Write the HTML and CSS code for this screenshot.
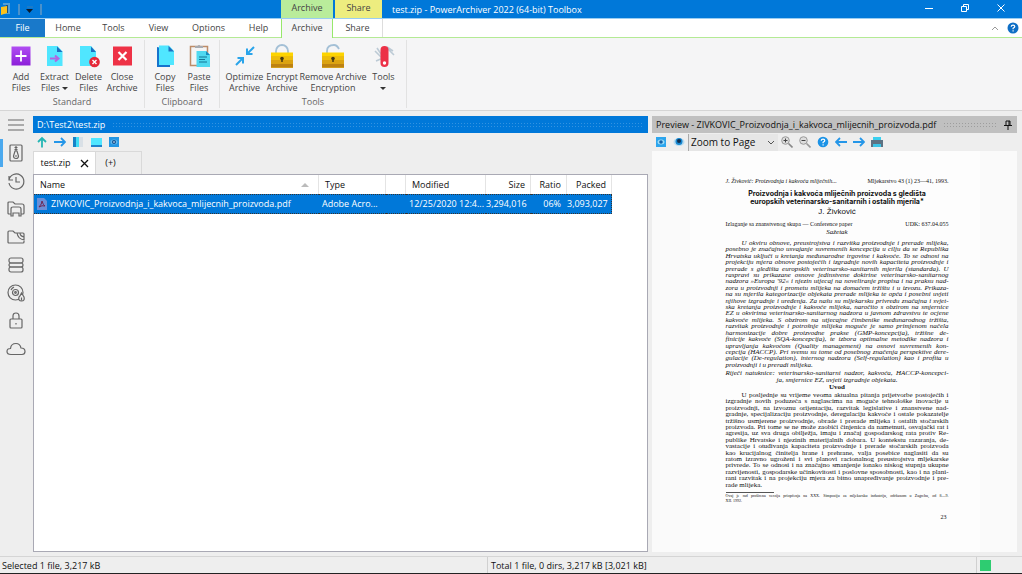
FILE: index.html
```html
<!DOCTYPE html>
<html lang="en">
<head>
<meta charset="utf-8">
<title>test.zip - PowerArchiver 2022 (64-bit) Toolbox</title>
<link rel="stylesheet" href="styles.css">
</head>
<body>
<div class="app">
  <header class="titlebar">
    <div class="quick">
      <svg width="12" height="14" viewBox="0 0 12 14"><path d="M3 2h6v9H4" fill="none" stroke="#4f9fd8" stroke-width="2"/><path d="M6 3h2v8H6z" fill="#28506e"/><path d="M1 5l6-1v7l-6 2z" fill="#fcc21b"/></svg>
      <i class="quick-sep"></i>
      <svg width="8" height="7" viewBox="0 0 8 7"><path d="M1 1h6" stroke="#3a7cb4"/><path d="M0 3h7L3.500 7z" fill="#0a1a2c"/></svg>
      <i class="quick-sep"></i>
    </div>
    <div class="context context-archive">Archive</div>
    <div class="context context-share">Share</div>
    <h1 class="title">test.zip - PowerArchiver 2022 (64-bit) Toolbox</h1>
    <div class="window-buttons">
      <button aria-label="Minimize"><svg width="10" height="10" viewBox="0 0 10 10"><path d="M1 5.500h8" stroke="#fff"/></svg></button>
      <button aria-label="Restore"><svg width="10" height="10" viewBox="0 0 10 10"><path d="M1.500 3.500h5v5h-5zM3.500 3V1.500h5v5H7" fill="none" stroke="#fff"/></svg></button>
      <button aria-label="Close"><svg width="10" height="10" viewBox="0 0 10 10"><path d="M1.500 1.500l7 7M8.500 1.500l-7 7" stroke="#fff"/></svg></button>
    </div>
  </header>

  <nav class="menu">
    <button class="menu-tab file">File</button>
    <button class="menu-tab wide">Home</button>
    <button class="menu-tab">Tools</button>
    <button class="menu-tab">View</button>
    <button class="menu-tab options">Options</button>
    <button class="menu-tab help">Help</button>
    <button class="menu-tab archive">Archive</button>
    <button class="menu-tab share">Share</button>
    <span class="spacer"></span>
    <button class="plain" aria-label="Collapse ribbon"><svg width="8" height="6" viewBox="0 0 8 6"><path d="M1 5l3-3 3 3" fill="none" stroke="#999"/></svg></button>
    <button class="plain" aria-label="Help"><svg width="12" height="12" viewBox="0 0 12 12"><circle cx="6" cy="6" r="5.500" fill="#0f6fc6"/><path d="M4.200 4.700Q4.300 3.200 6 3.200T7.800 4.600Q7.800 5.500 6.100 6.300V7.200M6.100 8.200v1.200" fill="none" stroke="#fff" stroke-width="1.200"/></svg></button>
  </nav>

  <div class="ribbon">
    <section class="group">
      <div class="tools">
        <button class="tool w32"><svg width="22" height="24" viewBox="0 0 22 24"><defs><linearGradient id="pu" x2="0" y2="1"><stop stop-color="#b04df2"/><stop offset="1" stop-color="#8c1fd9"/></linearGradient></defs><path d="M1.500 2.500h19v19h-19z" fill="url(#pu)"/><path d="M11 6.500v11M5.500 12h11" stroke="#fff" stroke-width="1.800"/></svg><span>Add<br>Files</span></button>
        <button class="tool w35"><svg width="22" height="24" viewBox="0 0 22 24"><path d="M3 2h10.500l5 5.500V22H3z" fill="#50e6ff"/><path d="M13 2.500l5.500 5.500H13z" fill="#1d6fc0"/><path d="M6 14.500h7M11 11.500l3.500 3-3.500 3" fill="none" stroke="#b165e0" stroke-width="2"/></svg><span>Extract<br>Files <b class="caret"></b></span></button>
        <button class="tool w33"><svg width="22" height="24" viewBox="0 0 22 24"><path d="M2 2h11l5 5.500V22H2z" fill="#50e6ff"/><path d="M13 2.500l5 5.500h-5z" fill="#1d6fc0"/><circle cx="16.500" cy="18" r="5.300" fill="#e62838"/><path d="M14.500 16l4 4M18.500 16l-4 4" stroke="#fff" stroke-width="1.400"/></svg><span>Delete<br>Files</span></button>
        <button class="tool w34"><svg width="22" height="24" viewBox="0 0 22 24"><path d="M2 2.500h19v19H2z" fill="#ee3246"/><path d="M7.500 8l8 8M15.500 8l-8 8" stroke="#fff" stroke-width="2.200"/></svg><span>Close<br>Archive</span></button>
      </div>
      <h2>Standard</h2>
    </section>
    <section class="group clipboard">
      <div class="tools">
        <button class="tool w34"><svg width="22" height="24" viewBox="0 0 22 24"><path d="M3 3v20h13V6z" fill="#1673cc"/><path d="M5 1.500h10l5 5.500v14H5z" fill="#50e6ff"/><path d="M14.500 2l5.500 5.500h-5.500z" fill="#1d6fc0"/></svg><span>Copy<br>Files</span></button>
        <button class="tool w34"><svg width="22" height="24" viewBox="0 0 22 24"><path d="M2.500 2.500h17v19h-17z" fill="#f4f4f4" stroke="#bd8c68" stroke-width="1.500"/><path d="M7 4V2h2.500Q11 0 12.500 2H15v2z" fill="#a8abb0"/><path d="M8.500 7H18l4 4v12H8.500z" fill="#50d9f0"/><path d="M18 7l4 4h-4z" fill="#168dc0"/><path d="M11 13h8M11 15.500h6M11 18h8" stroke="#157796"/></svg><span>Paste<br>Files</span></button>
      </div>
      <h2>Clipboard</h2>
    </section>
    <section class="group">
      <div class="tools">
        <button class="tool w39"><svg width="22" height="24" viewBox="0 0 22 24"><g fill="none" stroke="#2aa4ea" stroke-width="2"><path d="M20 3l-6.500 6.500M13 4.500V10h5.500"/><path d="M2 21l6.500-6.500M3.500 14H9v5.500"/></g></svg><span>Optimize<br>Archive</span></button>
        <button class="tool w36"><svg width="22" height="24" viewBox="0 0 22 24"><path d="M5 10V7a6 6 0 0 1 12 0v3" fill="none" stroke="#a4c0d6" stroke-width="1.800"/><path d="M0 8.500h22v15H0z" fill="#fdd400"/><path d="M0 12h22v11.500H0z" fill="#edbd0b"/><path d="M0 16h22v7.500H0z" fill="#dba312"/><path d="M0 20h22v3.500H0z" fill="#bd8212"/><path d="M11 14v4" stroke="#443913" stroke-width="1.500"/><circle cx="11" cy="14.500" r="1.800" fill="#443913"/></svg><span>Encrypt<br>Archive</span></button>
        <button class="tool w66"><svg width="22" height="24" viewBox="0 0 22 24"><path d="M5 9V7q0-6 7-6 3 0 5 4" fill="none" stroke="#a4c0d6" stroke-width="1.800"/><path d="M0 8.500h22v15H0z" fill="#fdd400"/><path d="M0 12h22v11.500H0z" fill="#edbd0b"/><path d="M0 16h22v7.500H0z" fill="#dba312"/><path d="M0 20h22v3.500H0z" fill="#bd8212"/><path d="M11 14v4" stroke="#443913" stroke-width="1.500"/><circle cx="11" cy="14.500" r="1.800" fill="#443913"/></svg><span>Remove Archive<br>Encryption</span></button>
        <button class="tool w35"><svg width="22" height="24" viewBox="0 0 22 24"><path d="M4 4l6 9M2 7l8 8M3 17l7-3M14 4l7 7M14 3l6 4" fill="none" stroke="#bccad5" stroke-width="1.600"/><rect x="7.500" y="2" width="8" height="21" rx="4" fill="#ec3147"/><circle cx="11.500" cy="19" r="1.700" fill="#fff"/></svg><span>Tools<br><b class="caret"></b></span></button>
      </div>
      <h2>Tools</h2>
    </section>
  </div>

  <main class="work">
    <nav class="rail">
      <button aria-label="Menu"><svg width="18" height="18" viewBox="0 0 18 18"><path d="M1 4h16M1 9h16M1 14h16"/></svg></button>
      <button class="active" aria-label="Archive"><svg width="18" height="18" viewBox="0 0 18 18"><rect x="3" y="1" width="12" height="16" rx="1"/><path d="M9 2v5M7.500 3.500h3M7.500 5.500h3M8 7h2l1.500 5q0 2.500-2.500 2.500t-2.500-2.500zM8 12h2"/></svg></button>
      <button aria-label="History"><svg width="18" height="18" viewBox="0 0 18 18"><path d="M2 4v4h4M2 8a7.500 7.500 0 1 1 0 3M9 5v5h4"/></svg></button>
      <button aria-label="Folders"><svg width="18" height="18" viewBox="0 0 18 18"><path d="M4 14H2q-1 0-1-1V3q0-1 1-1h4l2 2h7q2 0 2 2v7q0 1-1 1h-2M4 16V9q0-2 2-2h6q2 0 2 2v7h-2v-3H6v3z"/></svg></button>
      <button aria-label="Network"><svg width="18" height="18" viewBox="0 0 18 18"><path d="M17 13v1q0 1-1 1H2q-1 0-1-1V4q0-1 1-1h4l2 2h8q1 0 1 1v6q-6-1-7-7M13 5q0 3 4 4"/></svg></button>
      <button aria-label="Storage"><svg width="18" height="18" viewBox="0 0 18 18"><rect x="2" y="2" width="14" height="5" rx="2"/><rect x="2" y="7" width="14" height="4" rx="2"/><rect x="2" y="11" width="14" height="5" rx="2"/></svg></button>
      <button aria-label="Burn disc"><svg width="18" height="18" viewBox="0 0 18 18"><circle cx="8.500" cy="8.500" r="7.500"/><circle cx="8.500" cy="8.500" r="3"/><circle cx="8.500" cy="8.500" r=".8"/><path d="M4 6q1-2 3-3"/><path d="M14.500 9l2.500 4q1 4-2.500 4T12 13l1-1z" fill="#eee"/><path d="M14.500 13.500v3"/></svg></button>
      <button aria-label="Encryption"><svg width="18" height="18" viewBox="0 0 18 18"><rect x="3" y="7" width="12" height="9" rx="1"/><path d="M6 7V4q0-3 3-3t3 3v3M9 11v1.500"/></svg></button>
      <button aria-label="Cloud"><svg width="20" height="18" viewBox="0 0 20 18"><path d="M5 14.500q-4 0-4-3 0-3 3.500-3 .5-5 5.500-5 4 0 5 4.500 4 0 4 3.500 0 3-3 3z"/></svg></button>
    </nav>

    <section class="files">
      <header class="pane-head"><h2>D:\Test2\test.zip</h2><i class="grip"></i></header>
      <div class="toolbar">
        <button aria-label="Up"><svg width="12" height="12" viewBox="0 0 12 12"><path d="M6 11.500V2M2 6l4-4 4 4" fill="none" stroke="#24b6b4" stroke-width="1.800"/></svg></button>
        <button aria-label="Forward"><svg width="12" height="12" viewBox="0 0 12 12"><path d="M0 6h10M7 2l4 4-4 4" fill="none" stroke="#2496e8" stroke-width="1.800"/></svg></button>
        <button aria-label="Tree pane"><svg width="12" height="12" viewBox="0 0 12 12"><path d="M1 1h10v10H1z" fill="#d9e0e6"/><path d="M1 1h6v10H1z" fill="#40dcf5"/><path d="M1 1h3v10H1z" fill="#1683c8"/></svg></button>
        <button aria-label="Bottom pane"><svg width="12" height="12" viewBox="0 0 12 12"><path d="M1 2h11v8H1z" fill="#50e6ff"/><path d="M1 9h11v2H1z" fill="#1e83cc"/></svg></button>
        <button aria-label="Preview pane"><svg width="12" height="12" viewBox="0 0 12 12"><path d="M1 1h10v10H1z" fill="#2496e3"/><ellipse cx="6" cy="6" rx="3.500" ry="2.500" fill="#63b8ec"/><circle cx="6" cy="6" r="2" fill="#0e4e91"/><circle cx="6" cy="6" r=".8" fill="#fff"/></svg></button>
      </div>
      <div class="tabs">
        <button class="tab current">test.zip<svg width="9" height="9" viewBox="0 0 9 9"><path d="M1 1l7 7M8 1L1 8" stroke="#111" stroke-width="1.300"/></svg></button>
        <button class="tab add">(+)</button>
      </div>
      <div class="list">
        <table>
          <colgroup><col class="c-name"><col class="c-type"><col class="c-blank"><col class="c-mod"><col class="c-size"><col class="c-ratio"><col class="c-pack"></colgroup>
          <thead><tr><th><span class="sorted">Name<i class="sort"></i></span></th><th>Type</th><th></th><th>Modified</th><th class="num">Size</th><th class="num">Ratio</th><th class="num">Packed</th></tr></thead>
          <tbody><tr><td><span class="file-name"><svg width="10" height="12" viewBox="0 0 10 12"><path d="M0 0h7l3 3v9H0z" fill="#6a8fd8"/><path d="M2 9q3-3 3-6 1 4 3 5-3-1-6 1z" fill="none" stroke="#6e2652"/></svg>ZIVKOVIC_Proizvodnja_i_kakvoca_mlijecnih_proizvoda.pdf</span></td><td>Adobe Acro...</td><td></td><td>12/25/2020 12:4...</td><td class="num">3,294,016</td><td class="num">06%</td><td class="num">3,093,027</td></tr></tbody>
        </table>
      </div>
    </section>

    <section class="preview">
      <header class="pane-head idle"><h2>Preview - ZIVKOVIC_Proizvodnja_i_kakvoca_mlijecnih_proizvoda.pdf</h2><i class="grip"></i><button class="plain" aria-label="Pin"><svg width="8" height="10" viewBox="0 0 8 10"><path d="M2 5V1h4v4M5 1v4M0 5.500h8M4 6v4" fill="none" stroke="#111"/></svg></button></header>
      <div class="toolbar">
        <button aria-label="Preview"><svg width="12" height="12" viewBox="0 0 12 12"><path d="M1 1h10v10H1z" fill="#2ca5ee"/><ellipse cx="6" cy="6" rx="3.500" ry="2.500" fill="#9cdcf8"/><circle cx="6" cy="6" r="1.800" fill="#1361a8"/></svg></button>
        <button aria-label="View"><svg width="12" height="12" viewBox="0 0 12 12"><ellipse cx="6" cy="6" rx="5.500" ry="4" fill="#b9dcf0"/><circle cx="6" cy="5.500" r="3.500" fill="#1686cf"/><circle cx="6" cy="5" r="2" fill="#0d2f50"/></svg></button>
        <select aria-label="Zoom"><option>Zoom to Page</option></select>
        <button aria-label="Zoom in"><svg width="12" height="12" viewBox="0 0 12 12"><circle cx="4.500" cy="4.500" r="3.800" fill="#ddd" stroke="#999"/><path d="M2.500 4.500h4M4.500 2.500v4" stroke="#444"/><path d="M7.500 7.500l4 4" stroke="#888" stroke-width="1.600"/></svg></button>
        <button aria-label="Zoom out"><svg width="12" height="12" viewBox="0 0 12 12"><circle cx="4.500" cy="4.500" r="3.800" fill="#ddd" stroke="#999"/><path d="M2.500 4.500h4" stroke="#444"/><path d="M7.500 7.500l4 4" stroke="#999" stroke-width="1.600"/></svg></button>
        <button aria-label="Help"><svg width="12" height="12" viewBox="0 0 12 12"><circle cx="6" cy="6" r="5.300" fill="#1c93e6"/><path d="M4.200 4.700Q4.300 3.200 6 3.200T7.800 4.600Q7.800 5.500 6.100 6.300V7.200M6.100 8.200v1.200" fill="none" stroke="#fff" stroke-width="1.200"/></svg></button>
        <button aria-label="Previous"><svg width="12" height="12" viewBox="0 0 12 12"><path d="M12 6H2M5 2L1 6l4 4" fill="none" stroke="#2496e8" stroke-width="1.800"/></svg></button>
        <button aria-label="Next"><svg width="12" height="12" viewBox="0 0 12 12"><path d="M0 6h10M7 2l4 4-4 4" fill="none" stroke="#2496e8" stroke-width="1.800"/></svg></button>
        <button aria-label="Print"><svg width="12" height="12" viewBox="0 0 12 12"><path d="M2 1h8v4H2z" fill="#3bd0ef"/><path d="M0 4h12v7H0z" fill="#5d7283"/><path d="M2 8h8v3H2z" fill="#3cc4e6"/></svg></button>
      </div>
      <div class="viewer">
        <article class="paper">
          <div class="run-head"><i>J. Živković: Proizvodnja i kakvoća mliječnih...</i><span>Mljekarstvo 43 (1) 23—41, 1993.</span></div>
          <h3>Proizvodnja i kakvoća mliječnih proizvoda s gledišta<br>europskih veterinarsko-sanitarnih i ostalih mjerila*</h3>
          <p class="author">J. Živković</p>
          <div class="meta"><span>Izlaganje sa znanstvenog skupa — Conference paper</span><span>UDK: 637.04.055</span></div>
          <p class="abstract-head">Sažetak</p>
          <div class="lines abstract">
            <p class="first">U okviru obnove, preustrojstva i razvitka proizvodnje i prerade mlijeka,</p>
            <p>posebno je značajno usvajanje suvremenih koncepcija u cilju da se Republika</p>
            <p>Hrvatska uključi u kretanja međunarodne trgovine i kakvoće. To se odnosi na</p>
            <p>projekciju mjera obnove postojećih i izgradnje novih kapaciteta proizvodnje i</p>
            <p>prerade s gledišta europskih veterinarsko-sanitarnih mjerila (standarda). U</p>
            <p>raspravi su prikazane osnove jedinstvene doktrine veterinarsko-sanitarnog</p>
            <p>nadzora »Europa '92« i njezin utjecaj na noveliranje propisa i na praksu nad-</p>
            <p>zora u proizvodnji i prometu mlijeka na domaćem tržištu i u izvozu. Prikaza-</p>
            <p>na su mjerila kategorizacije objekata prerade mlijeka te opća i posebni uvjeti</p>
            <p>njihove izgradnje i uređenja. Za našu su mljekarsku privredu značajna i svjet-</p>
            <p>ska kretanja proizvodnje i kakvoće mlijeka, naročito s obzirom na smjernice</p>
            <p>EZ u okvirima veterinarsko-sanitarnog nadzora u javnom zdravstvu te ocjene</p>
            <p>kakvoće mlijeka. S obzirom na utjecajne čimbenike međunarodnog tržišta,</p>
            <p>razvitak proizvodnje i potrošnje mlijeka moguće je samo primjenom načela</p>
            <p>harmonizacije dobre proizvodne prakse (GMP-koncepcija), tržišne de-</p>
            <p>finicije kakvoće (SQA-koncepcija), te izbora optimalne metodike nadzora i</p>
            <p>upravljanja kakvoćom (Quality management) na osnovi suvremenih kon-</p>
            <p>cepcija (HACCP). Pri svemu su tome od posebnog značenja perspektive dere-</p>
            <p>gulacije (De-regulation), internog nadzora (Self-regulation) kao i profita u</p>
            <p class="last">proizvodnji i u preradi mlijeka.</p>
          </div>
          <div class="lines keywords">
            <p>Riječi natuknice: veterinarsko-sanitarni nadzor, kakvoća, HACCP-koncepci-</p>
            <p class="centre">ja, smjernice EZ, uvjeti izgradnje objekata.</p>
          </div>
          <h4>Uvod</h4>
          <div class="lines intro">
            <p class="first">U posljednje su vrijeme veoma aktualna pitanja prijetvorbe postojećih i</p>
            <p>izgradnje novih poduzeća s naglascima na moguće tehnološke inovacije u</p>
            <p>proizvodnji, na izvoznu orijentaciju, razvitak legislative i znanstvene nad-</p>
            <p>gradnje, specijalizaciju proizvodnje, deregulaciju kakvoće i ostale pokazatelje</p>
            <p>tržišno usmjerene proizvodnje, obrade i prerade mlijeka i ostalih stočarskih</p>
            <p>proizvoda. Pri tome se ne može zaobići činjenica da nametnuti, osvajački rat i</p>
            <p>agresija, uz sva druga obilježja, imaju i značaj gospodarskog rata protiv Re-</p>
            <p>publike Hrvatske i njezinih materijalnih dobara. U kontekstu razaranja, de-</p>
            <p>vastacije i otuđivanja kapaciteta proizvodnje i prerade stočarskih proizvoda</p>
            <p>kao krucijalnog činitelja hrane i prehrane, valja posebice naglasiti da su</p>
            <p>ratom izravno ugroženi i svi planovi racionalnog preustrojstva mljekarske</p>
            <p>privrede. To se odnosi i na značajno smanjenje ionako niskog stupnja ukupne</p>
            <p>razvijenosti, gospodarske učinkovitosti i poslovne sposobnosti, kao i na plani-</p>
            <p>rani razvitak i na projekciju mjera za bitno unapređivanje proizvodnje i pre-</p>
            <p class="last">rade mlijeka.</p>
          </div>
          <div class="lines footnote">
            <p>Ovaj je rad proširena verzija priopćenja na XXX. Simpoziju za mljekarsku industriju, održanom u Zagrebu, od 8—9.</p>
            <p class="last">XII. 1992.</p>
          </div>
          <p class="page-no">23</p>
        </article>
      </div>
    </section>
  </main>

  <footer class="status">
    <span class="selected">Selected 1 file, 3,217 kB</span>
    <span class="total">Total 1 file, 0 dirs, 3,217 kB [3,021 kB]</span>
    <span class="light"><i></i></span>
  </footer>
</div>
</body>
</html>
```
FILE: styles.css
```css
* { box-sizing: border-box; }
body { margin: 0; font: 9px/12px "Open Sans", "Noto Sans", sans-serif; color: #111; background: #eee; }
h1, h2, h3, h4, p { margin: 0; font-size: inherit; font-weight: 400; }
button { margin: 0; padding: 0; border: 0; background: none; font: inherit; color: inherit; }
svg { display: block; flex: none; }
.app { display: flex; flex-direction: column; height: 100vh; border-bottom: 1px solid #222; }
.plain { display: flex; align-items: center; justify-content: center; }
.spacer { flex: 1; }

.titlebar { display: flex; height: 19px; flex: none; background: #0078d9; border-bottom: 1px solid #9acdf2; color: #fff; }
.quick { width: 281px; display: flex; align-items: center; gap: 6px; }
.quick-sep { width: 2px; height: 11px; background: #4a91cb; }
.context { height: 18px; line-height: 16px; text-align: center; color: #444; }
.context-archive { width: 52px; margin-right: 2px; background: #b9ec9b; }
.context-share { width: 47px; background: #eded7f; }
.title { flex: 1; padding-left: 10px; line-height: 19px; }
.window-buttons { display: flex; padding-right: 3px; }
.window-buttons button { width: 36px; height: 16px; display: flex; align-items: center; justify-content: center; }

.menu { display: flex; flex: none; height: 19px; background: #fff; border-bottom: 1px solid #b4ea94; color: #444; }
.menu-tab { width: 45px; height: 18px; }
.menu .wide { width: 46px; }
.menu .file { background: #1979ca; color: #fff; }
.menu .options { width: 55px; }
.menu .help { width: 45px; }
.menu .archive { width: 52px; height: 19px; padding-bottom: 1px; background: #f5f5f6; border: solid #97e86b; border-width: 0 1px; }
.menu .share { width: 50px; border-right: 1px solid #ddd; }
.menu .plain { width: 18px; }

.ribbon { display: flex; flex: none; height: 73px; background: #f5f5f6; border-bottom: 1px solid #d5d5d5; color: #444; }
.group { display: flex; flex-direction: column; margin: 2px 0; padding: 0 5px; border-right: 1px solid #e2e2e2; }
.group h2 { text-align: center; color: #666; }
.clipboard { padding: 0 3px; }
.tools { display: flex; height: 58px; }
.tool { display: flex; flex-direction: column; align-items: center; padding-top: 4px; gap: 3px; line-height: 11px; white-space: nowrap; }
.caret { display: inline-block; border: solid transparent; border-width: 3px 3px 0; border-top-color: #333; vertical-align: middle; }
.w32 { width: 32px; } .w33 { width: 33px; } .w34 { width: 34px; } .w35 { width: 35px; }
.w36 { width: 36px; } .w39 { width: 39px; } .w66 { width: 66px; }

.work { display: flex; flex: 1; min-height: 0; padding-right: 5px; }
.rail { width: 33px; flex: none; }
.rail button { display: flex; width: 100%; height: 28px; align-items: center; justify-content: center; border-left: 3px solid transparent; padding-right: 4px; }
.rail .active { border-color: #4ba9ee; }
.rail svg { fill: none; stroke: #666; stroke-width: 1.2; }

.files { display: flex; flex-direction: column; flex: 615 1 0; min-width: 0; padding: 5px 0 4px; margin-right: 4px; }
.pane-head { display: flex; align-items: center; flex: none; height: 17px; padding: 0 5px 0 4px; gap: 7px; background: #0078d9; color: #fff; }
.pane-head h2 { white-space: nowrap; }
.idle { background: #c0c0c0; color: #111; }
.grip { flex: 1; height: 6px; opacity: .2; background: radial-gradient(circle, currentColor 1px, transparent 1px) 0 0 / 3px 3px; }
.toolbar { display: flex; align-items: center; flex: none; height: 18px; }
.toolbar button { display: flex; align-items: center; justify-content: center; width: 18px; height: 18px; }
.toolbar select { width: 90px; height: 17px; padding: 0 6px 0 2px; border: 0; border-left: 1px solid #aaa; border-radius: 0; font: 10px/16px "Open Sans", sans-serif; color: #111; appearance: none; background: #e6e6e6 url("data:image/svg+xml,%3Csvg xmlns='http://www.w3.org/2000/svg' width='8' height='5'%3E%3Cpath d='M1 1l3 3 3-3' fill='none' stroke='%23555'/%3E%3C/svg%3E") no-repeat right 3px center; }
.tabs { display: flex; flex: none; height: 23px; }
.tab { display: flex; align-items: center; justify-content: center; gap: 9px; border: 1px solid #d9d9d9; border-bottom: 0; }
.current { width: 63px; background: #fff; }
.add { width: 46px; border-left: 0; padding-right: 16px; }
.list { flex: 1; min-height: 0; border: 1px solid #a9a9b4; background: #fff; overflow: hidden; }
table { width: 578px; table-layout: fixed; border-collapse: separate; border-spacing: 0; }
.c-name { width: 285px; } .c-type { width: 67px; } .c-blank { width: 20px; } .c-mod { width: 80px; }
.c-size { width: 45px; } .c-ratio { width: 36px; } .c-pack { width: 45px; }
th { height: 19px; padding: 0 6px; text-align: left; font-weight: 400; border-right: 1px solid #e4e4e4; }
td { height: 20px; padding: 0 3px; background: #0078d9; color: #fff; white-space: nowrap; border: dotted #333; border-width: 1px 0; }
td:last-child { border-right-width: 1px; }
.num, th.num { text-align: right; padding: 0 5px; }
td.num { padding: 0 6px 0 0; }
.sorted, .file-name { display: flex; align-items: center; justify-content: space-between; }
.file-name { justify-content: flex-start; gap: 4px; }
.sort { border: solid transparent; border-width: 0 4px 4px; border-bottom-color: #bbb; margin-right: 3px; }

.preview { display: flex; flex-direction: column; flex: 365 1 0; min-width: 0; padding: 5px 0 4px; }
.viewer { display: flex; justify-content: center; flex: 1; min-height: 0; background: #fafafa; overflow: hidden; }
.paper { width: 290px; padding: 25px 31px 0 36px; background: #fdfdfd; font: 7px/7px "Liberation Serif", serif; color: #111; }
.paper p { white-space: nowrap; }
.run-head, .meta { display: flex; justify-content: space-between; font-size: 6px; line-height: 10px; }
.paper h3 { margin-top: 4px; text-align: center; font: bold 7px/8px Inter, sans-serif; color: #111; white-space: nowrap; }
.paper .author { text-align: center; font: 8px/11px "Liberation Sans", sans-serif; }
.meta { margin-top: 2px; }
.abstract-head { text-align: center; font-style: italic; }
.lines { display: flex; flex-direction: column; }
.lines p { flex: 1 1 0; min-height: 0; text-align-last: justify; }
.lines .first { padding-left: 16px; }
.lines .last { text-align-last: left; }
.lines .centre { text-align-last: center; }
.abstract { height: 128px; margin-top: 4px; font-style: italic; }
.keywords { height: 14px; margin-top: 2px; font-style: italic; }
.paper h4 { text-align: center; font-weight: 700; }
.intro { height: 96px; margin-top: 1px; }
.footnote { height: 11px; margin-top: 4px; font-size: 4px; line-height: 5px; }
.footnote::before { content: ""; width: 48px; border-top: 1px solid #555; }
.page-no { margin-top: 11px; padding-right: 2px; text-align: right; font-size: 6px; }

.status { display: flex; flex: none; height: 17px; border-top: 1px solid #d5d5d5; line-height: 17px; }
.selected { flex: 1; padding-left: 2px; }
.total { flex: 1; padding-left: 3px; border-left: 1px solid #d0d0d0; }
.light { width: 46px; padding: 3px; border-left: 1px solid #d0d0d0; }
.light i { display: block; width: 11px; height: 11px; background: #2ecc71; }
```
